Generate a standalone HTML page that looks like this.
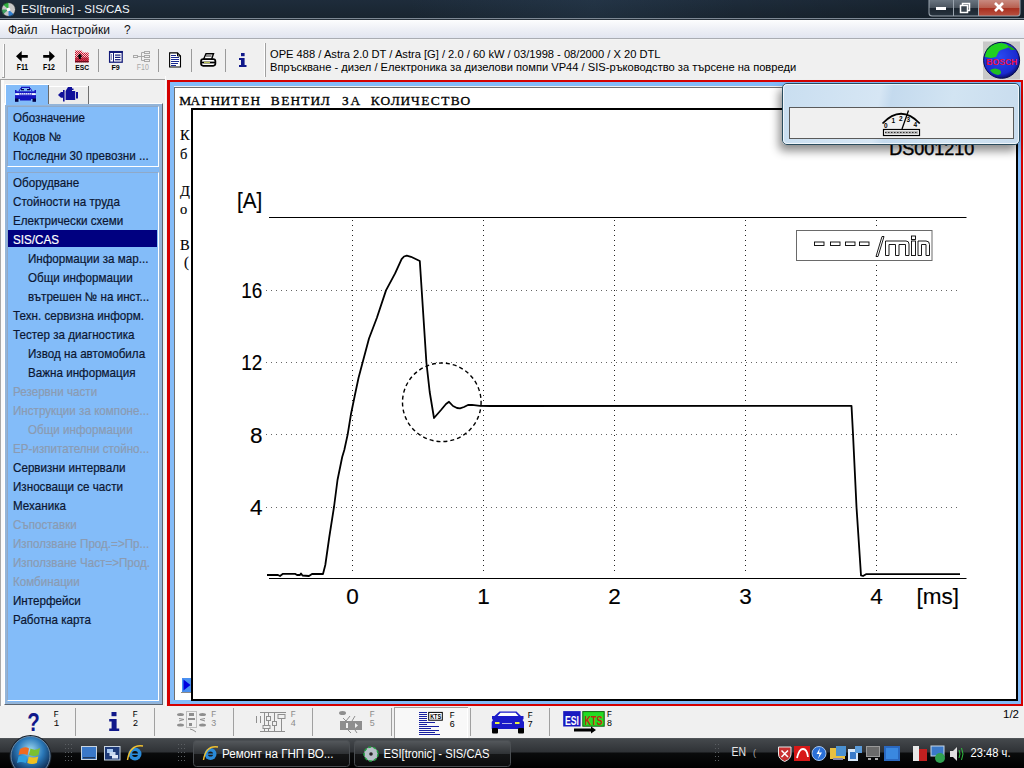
<!DOCTYPE html>
<html><head><meta charset="utf-8">
<style>
*{margin:0;padding:0;box-sizing:border-box}
html,body{width:1024px;height:768px;overflow:hidden;background:#f0f0f0;font-family:"Liberation Sans",sans-serif;position:relative}
.a{position:absolute}
.t{position:absolute;white-space:pre;line-height:1}
.li{font-size:12.2px;-webkit-text-stroke:0.2px currentColor;transform:scaleX(0.955);transform-origin:0 0}
.ser{font-family:"Liberation Serif",serif;font-size:14.5px;color:#000;-webkit-text-stroke:0.15px #000}
</style></head><body>
<!-- TITLE BAR -->
<div class="a" style="left:0;top:0;width:1024px;height:19px;background:linear-gradient(#1e2c3b,#18242f)"></div>
<div class="a" style="left:0;top:0;width:1024px;height:18px;background:linear-gradient(90deg,rgba(0,0,0,0) 0%,rgba(0,0,0,0) 40%,rgba(60,90,120,0.18) 58%,rgba(0,0,0,0.0) 72%,rgba(0,0,0,0.15) 90%)"></div>
<div class="a" style="left:0;top:18px;width:1024px;height:1px;background:#7d8894"></div>
<div class="a" style="left:0;top:19px;width:1024px;height:1px;background:#27313b"></div>
<div class="t" style="left:21px;top:4px;font-size:11.5px;color:#f2f6fa">ESI[tronic] - SIS/CAS</div>
<svg class="a" style="left:0;top:0" width="1024" height="19" viewBox="0 0 1024 19">
<defs><linearGradient id="wb" x1="0" y1="0" x2="0" y2="1"><stop offset="0" stop-color="#6a7580"/><stop offset="0.5" stop-color="#4a545e"/><stop offset="0.55" stop-color="#1c2630"/><stop offset="1" stop-color="#27333e"/></linearGradient>
<linearGradient id="cb" x1="0" y1="0" x2="0" y2="1"><stop offset="0" stop-color="#c88a80"/><stop offset="0.5" stop-color="#b86050"/><stop offset="0.55" stop-color="#a83020"/><stop offset="1" stop-color="#b85040"/></linearGradient></defs>
<circle cx="8.5" cy="9.5" r="7" fill="#c8c8c8"/>
<path d="M8.5,9.5 L3,4.5 A7,7 0 0 1 8.5,2.5 Z" fill="#30b040"/>
<path d="M8.5,9.5 L14,14.5 A7,7 0 0 1 8.5,16.5 Z" fill="#3080d0"/>
<path d="M8.5,9.5 L1.5,9.5 A7,7 0 0 0 3,14.5 Z" fill="#40a060"/>
<circle cx="8.5" cy="9.5" r="1.8" fill="#fff"/><circle cx="8.5" cy="9.5" r="7" fill="none" stroke="#101820" stroke-width="0.8"/>
<path d="M928.5,0 V13 Q928.5,16.5 932,16.5 H1017.5 Q1020.5,16.5 1020.5,13 V0" fill="#9aa4ae"/>
<path d="M929.5,0 V12.5 Q929.5,15.5 932.5,15.5 H953 V0 Z" fill="url(#wb)"/>
<rect x="954" y="0" width="24" height="15.5" fill="url(#wb)"/>
<path d="M979,0 V15.5 H1017 Q1019.5,15.5 1019.5,12.5 V0 Z" fill="url(#cb)"/>
<rect x="936" y="7" width="10" height="3" fill="#fff"/>
<rect x="962.5" y="3.5" width="7" height="7" fill="none" stroke="#fff" stroke-width="1.5"/>
<rect x="960.5" y="5.5" width="7" height="7" fill="#3a454f" stroke="#fff" stroke-width="1.5"/>
<path d="M995,3 L1003,11 M1003,3 L995,11" stroke="#fff" stroke-width="2.6"/>
</svg>
<!-- MENU BAR -->
<div class="a" style="left:0;top:20px;width:1024px;height:20px;background:linear-gradient(#fdfdfe,#eef0f6 45%,#dfe3ef)"></div>
<div class="a" style="left:0;top:38px;width:1024px;height:1px;background:#a9acb2"></div>
<div class="a" style="left:0;top:39px;width:1024px;height:1px;background:#f4f4f4"></div>
<div class="a" style="left:0;top:40px;width:1024px;height:1px;background:#b8b8b8"></div>
<div class="t" style="left:8px;top:24px;font-size:12px;color:#111">Файл</div>
<div class="t" style="left:51px;top:24px;font-size:12px;color:#111">Настройки</div>
<div class="t" style="left:124px;top:24px;font-size:12px;color:#111">?</div>
<!-- TOOLBAR -->
<div class="a" style="left:0;top:40px;width:1024px;height:39px;background:#f0f0f0"></div>
<div class="a" style="left:0;top:79px;width:166px;height:1px;background:#a0a0a0"></div>
<svg class="a" style="left:0;top:0" width="1024" height="80" viewBox="0 0 1024 80">
<!-- grip -->
<line x1="3.5" y1="44" x2="3.5" y2="77" stroke="#fff" stroke-width="1"/>
<line x1="4.5" y1="44" x2="4.5" y2="77" stroke="#a0a0a0" stroke-width="1"/>
<line x1="2" y1="77.5" x2="5" y2="77.5" stroke="#a0a0a0" stroke-width="1"/>
<!-- separators -->
<g stroke="#9a9a9a" stroke-width="1">
<line x1="66.5" y1="49" x2="66.5" y2="72"/>
<line x1="98.5" y1="49" x2="98.5" y2="72"/>
<line x1="158.5" y1="49" x2="158.5" y2="72"/>
<line x1="191.5" y1="49" x2="191.5" y2="72"/>
<line x1="225.5" y1="49" x2="225.5" y2="72"/>
</g>
<line x1="264.5" y1="43" x2="264.5" y2="77" stroke="#fff" stroke-width="1"/>
<line x1="265.5" y1="43" x2="265.5" y2="77" stroke="#a0a0a0" stroke-width="1"/>
<!-- arrows -->
<path d="M16,56.3 L21.7,50.9 V55 H27.8 V57.8 H21.7 V61.7 Z" fill="#000"/>
<path d="M54.9,56.3 L49.2,50.9 V55 H43.2 V57.8 H49.2 V61.7 Z" fill="#000"/>
<g font-family="Liberation Sans" font-weight="bold" font-size="8" fill="#000">
<text x="16.8" y="70" textLength="11.2" lengthAdjust="spacingAndGlyphs" font-size="8.2">F11</text>
<text x="43" y="70" textLength="11.9" lengthAdjust="spacingAndGlyphs" font-size="8.2">F12</text>
<text x="75.2" y="70" textLength="13.8" lengthAdjust="spacingAndGlyphs">ESC</text>
<text x="111.5" y="70" textLength="8.3" lengthAdjust="spacingAndGlyphs">F9</text>
</g>
<text x="136.8" y="70" font-family="Liberation Sans" font-size="8.5" fill="#a8a8a8" textLength="12" lengthAdjust="spacingAndGlyphs">F10</text>
<!-- ESC folder -->
<defs><pattern id="chk" width="2" height="2" patternUnits="userSpaceOnUse"><rect x="0" y="0" width="2" height="2" fill="#c8102a"/><rect x="0" y="0" width="1" height="1" fill="#f6d0d6"/><rect x="1" y="1" width="1" height="1" fill="#f6d0d6"/></pattern></defs>
<path d="M75,50.5 H81.5 L83,52.5 H88.7 V62.2 H75 Z" fill="url(#chk)"/>
<rect x="75" y="57.5" width="13.7" height="4.7" fill="#b0102a" opacity="0.75"/>
<path d="M79.8,53.5 L77,56.8 H78.8 V59 H80.8 V56.8 H82.6 Z" fill="#000"/>
<line x1="75" y1="61.8" x2="88.7" y2="61.8" stroke="#500010" stroke-width="1"/>
<!-- F9 list -->
<rect x="109.6" y="51.6" width="12.6" height="10.6" fill="#fff" stroke="#121a78" stroke-width="1.3"/>
<rect x="109" y="51" width="13.8" height="2" fill="#121a78"/>
<line x1="113.5" y1="53" x2="113.5" y2="62" stroke="#121a78" stroke-width="1"/>
<g fill="#121a78"><rect x="111" y="54.5" width="1" height="1"/><rect x="111" y="56.5" width="1" height="1"/><rect x="111" y="58.5" width="1" height="1"/>
<rect x="115" y="54.5" width="5.5" height="1.2"/><rect x="115" y="56.8" width="5.5" height="1.2"/><rect x="115" y="59.1" width="5.5" height="1.2"/></g>
<!-- F10 tree -->
<g fill="none" stroke="#a9a9a9" stroke-width="1">
<rect x="133.5" y="55.5" width="4" height="2"/><line x1="137.5" y1="56.5" x2="141" y2="56.5"/>
<line x1="141.5" y1="52.5" x2="141.5" y2="60.5"/>
<line x1="141.5" y1="52.5" x2="144" y2="52.5"/><line x1="141.5" y1="56.5" x2="144" y2="56.5"/><line x1="141.5" y1="60.5" x2="144" y2="60.5"/>
<rect x="144.5" y="51.5" width="5" height="2"/><rect x="144.5" y="55.5" width="5" height="2"/><rect x="144.5" y="59.5" width="5" height="2"/>
</g>
<!-- document -->
<path d="M169.6,52.9 H177.5 L180.5,56 V67 H169.6 Z" fill="#fff" stroke="#000" stroke-width="1.1"/>
<path d="M177.5,52.9 V56 H180.5" fill="none" stroke="#000" stroke-width="1"/>
<g stroke="#1a2a90" stroke-width="1"><line x1="171" y1="55.5" x2="176" y2="55.5"/><line x1="171" y1="57.5" x2="179" y2="57.5"/><line x1="171" y1="59.5" x2="179" y2="59.5"/><line x1="171" y1="61.5" x2="179" y2="61.5"/><line x1="171" y1="63.5" x2="178" y2="63.5"/><line x1="171" y1="65.5" x2="176" y2="65.5"/></g>
<!-- printer -->
<path d="M203.5,59.5 L206,53.8 H213.5 L211.5,59.5 Z" fill="#fff" stroke="#000" stroke-width="1.4"/>
<line x1="206" y1="56" x2="211.5" y2="56" stroke="#000" stroke-width="0.9"/>
<rect x="201" y="59.2" width="14.4" height="6.6" rx="2.2" fill="#fff" stroke="#000" stroke-width="1.7"/>
<rect x="201" y="61.6" width="14.4" height="1.8" fill="#000"/>
<rect x="204" y="61.9" width="6" height="1.2" fill="#b8c050"/>
<!-- info i -->
<g fill="#10188a"><rect x="241" y="53" width="3.6" height="3.2"/><path d="M239,58 H244.6 V65 H246.5 V67 H239 V65 H241 V60 H239 Z"/></g>
<!-- bosch -->
<rect x="983" y="41.5" width="37" height="38" fill="#c8c8c8"/>
<defs><radialGradient id="glb" cx="0.45" cy="0.4" r="0.6"><stop offset="0" stop-color="#2a4af0"/><stop offset="0.8" stop-color="#1a2ad0"/><stop offset="1" stop-color="#0a1070"/></radialGradient></defs>
<circle cx="1001.6" cy="60.3" r="18" fill="url(#glb)"/>
<path d="M985,57 Q985,47 993,44 Q1000,42 1006,44 L1010,47 L1004,49 Q999,50 998,53 L996,57 L991,58 Z" fill="#20d020"/>
<path d="M1007,45.5 Q1012,46 1015,50 L1011,50 Z" fill="#18a818"/>
<path d="M990,70 Q995,67 1000,70 Q1003,74 998,75 Q992,74 990,70 Z" fill="#20c020"/>
<text x="1001.8" y="64.5" text-anchor="middle" font-family="Liberation Sans" font-weight="bold" font-size="9.5" fill="#f01040" textLength="31" lengthAdjust="spacingAndGlyphs">BOSCH</text>
<circle cx="1001.6" cy="60.3" r="18" fill="none" stroke="#080c50" stroke-width="1"/>
</svg>
<div class="t" style="left:270px;top:48.8px;font-size:11.15px;color:#000">OPE 488 / Astra 2.0 DT / Astra [G] / 2.0 / 60 kW / 03/1998 - 08/2000 / X 20 DTL</div>
<div class="t" style="left:270px;top:62px;font-size:11.15px;color:#000">Впръскване - дизел / Електроника за дизелови помпи VP44 / SIS-ръководство за търсене на повреди</div>
<!-- LEFT PANEL -->
<div class="a" style="left:0;top:80px;width:1px;height:626px;background:#a8a8a8"></div>
<div class="a" style="left:1px;top:80px;width:3px;height:626px;background:#fbfbfb"></div>
<div class="a" style="left:4px;top:103px;width:159px;height:602px;background:#93b4d8;border-left:1px solid #fff;border-top:1px solid #fff;border-right:1px solid #5a636d;border-bottom:1px solid #5a636d"></div>
<!-- tabs -->
<div class="a" style="left:5px;top:84px;width:44px;height:21px;background:#83bcf9;border-left:1px solid #fff;border-top:1px solid #fff"></div>
<div class="a" style="left:48px;top:85px;width:1px;height:19px;background:#6a6a6a"></div>
<div class="a" style="left:49px;top:86px;width:40px;height:18px;background:#ececec;border-top:1px solid #fff"></div>
<div class="a" style="left:88px;top:86px;width:1px;height:18px;background:#707070"></div>
<div class="a" style="left:7px;top:106px;width:152px;height:596px;background:#80b8f5"></div>
<!-- group 1 -->
<div class="a" style="left:7px;top:106px;width:152px;height:61px;background:#83bcf9;border-left:1px solid #8fa9c8;border-top:1px solid #8fa9c8;border-right:1px solid #fff;border-bottom:1px solid #fff"></div>
<!-- group 2 -->
<div class="a" style="left:7px;top:172px;width:152px;height:529px;background:#83bcf9;border-left:1px solid #8fa9c8;border-top:1px solid #8fa9c8;border-right:1px solid #fff;border-bottom:1px solid #fff"></div>
<div class="a" style="left:8px;top:230px;width:149px;height:17px;background:#000080"></div>
<div class="t li" style="left:12.5px;top:111.67px;color:#0b1631">Обозначение</div>
<div class="t li" style="left:12.5px;top:130.67px;color:#0b1631">Кодов №</div>
<div class="t li" style="left:12.5px;top:149.67px;color:#0b1631">Последни 30 превозни ...</div>
<div class="t li" style="left:12.5px;top:176.67px;color:#0b1631">Оборудване</div>
<div class="t li" style="left:12.5px;top:195.67px;color:#0b1631">Стойности на труда</div>
<div class="t li" style="left:12.5px;top:214.67px;color:#0b1631">Електрически схеми</div>
<div class="t li" style="left:12.5px;top:233.67px;color:#ffffff">SIS/CAS</div>
<div class="t li" style="left:27.5px;top:252.67px;color:#0b1631">Информации за мар...</div>
<div class="t li" style="left:27.5px;top:271.67px;color:#0b1631">Общи информации</div>
<div class="t li" style="left:27.5px;top:290.67px;color:#0b1631">вътрешен № на инст...</div>
<div class="t li" style="left:12.5px;top:309.67px;color:#0b1631">Техн. сервизна информ.</div>
<div class="t li" style="left:12.5px;top:328.67px;color:#0b1631">Тестер за диагностика</div>
<div class="t li" style="left:27.5px;top:347.67px;color:#0b1631">Извод на автомобила</div>
<div class="t li" style="left:27.5px;top:366.67px;color:#0b1631">Важна информация</div>
<div class="t li" style="left:12.5px;top:385.67px;color:#8b9bb2">Резервни части</div>
<div class="t li" style="left:12.5px;top:404.67px;color:#8b9bb2">Инструкции за компоне...</div>
<div class="t li" style="left:27.5px;top:423.67px;color:#8b9bb2">Общи информации</div>
<div class="t li" style="left:12.5px;top:442.67px;color:#8b9bb2">ЕР-изпитателни стойно...</div>
<div class="t li" style="left:12.5px;top:461.67px;color:#0b1631">Сервизни интервали</div>
<div class="t li" style="left:12.5px;top:480.67px;color:#0b1631">Износващи се части</div>
<div class="t li" style="left:12.5px;top:499.67px;color:#0b1631">Механика</div>
<div class="t li" style="left:12.5px;top:518.67px;color:#8b9bb2">Съпоставки</div>
<div class="t li" style="left:12.5px;top:537.67px;color:#8b9bb2">Използване Прод.=&gt;Пр...</div>
<div class="t li" style="left:12.5px;top:556.67px;color:#8b9bb2">Използване Част=&gt;Прод.</div>
<div class="t li" style="left:12.5px;top:575.67px;color:#8b9bb2">Комбинации</div>
<div class="t li" style="left:12.5px;top:594.67px;color:#0b1631">Интерфейси</div>
<div class="t li" style="left:12.5px;top:613.67px;color:#0b1631">Работна карта</div>
<svg class="a" style="left:0;top:80px" width="100" height="30" viewBox="0 80 100 30">
<g fill="#1414c0">
<rect x="21" y="86.7" width="9" height="1.3"/>
<path d="M18.5,91 L20.5,88 H22 V89 H20.8 L19.5,91 Z M32.5,91 L30.5,88 H29 V89 H30.2 L31.5,91 Z"/>
<rect x="15" y="90" width="1.5" height="2.5"/><rect x="34.5" y="90" width="1.5" height="2.5"/>
<rect x="15" y="91.3" width="21" height="2"/>
<rect x="15" y="95" width="21" height="4"/>
<rect x="20" y="98.5" width="11" height="2"/>
</g>
<g fill="#000048">
<rect x="21" y="89" width="3" height="1.3"/><rect x="27" y="89" width="3" height="1.3"/>
<rect x="15" y="98.5" width="3.5" height="3.3"/><rect x="32.5" y="98.5" width="3.5" height="3.3"/>
</g>
<rect x="15.5" y="93.2" width="20" height="1.9" fill="#f4f4ff"/>
<path d="M19,93.2 h1v1h1v-1h1v1h1v-1h1v1h1v-1h1v1h1v-1h1v1h1v-1h1v1h1v-1h1v1.9 h-13 Z" fill="#1414c0" opacity="0.55"/>
<g fill="#10109a">
<path d="M58,95 L61,92 H63 V97.7 H61 Z"/>
<rect x="63" y="90" width="1.6" height="11.5"/>
<rect x="65.6" y="91" width="9.6" height="9"/>
<path d="M65.6,91 L68,87 H72 V88.5 H73.5 V90 H72 V91 Z"/>
<rect x="76" y="92" width="2" height="6.5"/>
</g>
</svg>

<div class="a" style="left:165px;top:76px;width:1px;height:630px;background:#fdfdfd"></div>
<!-- CONTENT FRAME -->
<div class="a" style="left:167px;top:80px;width:856px;height:626px;border:2px solid #d40000;border-left-width:3px"></div>
<div class="a" style="left:170px;top:82px;width:851px;height:622px;border:4px solid #83bcf9;border-right-width:3px;border-bottom-width:4px"></div>
<div class="a" style="left:174px;top:87px;width:844px;height:613px;background:#fff;border-left:1px solid #707070;border-top:1px solid #707070"></div>
<svg class="a" style="left:175px;top:90px" width="310" height="18" viewBox="175 90 310 18"><text x="185.3 195.3 205.3 215.3 225.3 235.3 245.3 255.3 265.3 275.3 285.3 295.3 305.3 315.3 325.3 335.3 345.3 355.3 365.3 375.3 385.3 395.3 405.3 415.3 425.3 435.3 445.3 455.3 465.3" y="104.9" text-anchor="middle" font-family="Liberation Serif" font-size="13.4" fill="#000" stroke="#000" stroke-width="0.3">МАГНИТЕН ВЕНТИЛ ЗА КОЛИЧЕСТВО</text></svg>
<div class="t ser" style="left:180px;top:128px">К</div>
<div class="t ser" style="left:180px;top:147px">б</div>
<div class="t ser" style="left:180px;top:184px">Д</div>
<div class="t ser" style="left:180px;top:202px">о</div>
<div class="t ser" style="left:180px;top:238px">В</div>
<div class="t ser" style="left:184px;top:255px">(</div>
<!-- CHART WINDOW -->
<div class="a" style="left:191px;top:108px;width:827px;height:593px;border:2px solid #000;background:#fff"></div>
<svg class="a" style="left:0;top:0" width="1024" height="768" viewBox="0 0 1024 768">
<defs><clipPath id="cw"><rect x="193" y="110" width="823" height="589"/></clipPath></defs>
<g clip-path="url(#cw)">
<g stroke="#000" stroke-width="1" fill="none">
<line x1="269" y1="217.5" x2="966.5" y2="217.5"/>
<line x1="269" y1="578.5" x2="966.5" y2="578.5"/>
</g>
<g stroke="#666" stroke-width="1" stroke-dasharray="1 4" fill="none">
<line x1="266" y1="290.5" x2="960" y2="290.5"/>
<line x1="266" y1="362.5" x2="960" y2="362.5"/>
<line x1="266" y1="434.5" x2="960" y2="434.5"/>
<line x1="266" y1="507.5" x2="960" y2="507.5"/>
</g>
<g stroke="#222" stroke-width="1" stroke-dasharray="1 4" fill="none">
<line x1="352.5" y1="220" x2="352.5" y2="575"/>
<line x1="483.5" y1="220" x2="483.5" y2="575"/>
<line x1="614.5" y1="220" x2="614.5" y2="575"/>
<line x1="745.5" y1="220" x2="745.5" y2="575"/>
<line x1="876.5" y1="220" x2="876.5" y2="575"/>
</g>
<circle cx="441.8" cy="402.3" r="39.3" stroke="#000" stroke-width="1.4" stroke-dasharray="4 3" fill="none"/>
<polyline fill="none" stroke="#000" stroke-width="1.8" stroke-linejoin="round" points="267,575 278,575 280,576 283,573.8 295,573.8 297,575 300,575 301,573.5 302.5,575.5 309,576 312,574 323,574 325.3,565 329.3,537 334,507 337.5,480 342.2,457 344.3,450 347.7,434.4 351,414 354.7,396 358.5,378 362.6,362.5 369,338.5 376.9,317.7 386,290.4 395.1,273.4 401.6,259.1 404,256.5 406.8,255.7 411,256.8 419.8,261 426.4,362.5 429.7,392 434,418 441,410 446,404 449,401.8 453,406 457,408 460,408.3 464,407 468,405 472,404.8 480,405.8 490,406 851.5,405.8 853,434 856.5,507 861,575.4 863,576 866,574.2 960,574.2"/>
<g font-family="Liberation Sans" font-size="22.5" fill="#000" stroke="#000" stroke-width="0.15">
<text x="237" y="208" textLength="25.2" lengthAdjust="spacingAndGlyphs">[A]</text>
<text x="241.3" y="298" textLength="21" lengthAdjust="spacingAndGlyphs">16</text>
<text x="241.3" y="370.3" textLength="21" lengthAdjust="spacingAndGlyphs">12</text>
<text x="262.5" y="442.8" text-anchor="end">8</text>
<text x="262.5" y="515" text-anchor="end">4</text>
<text x="352.5" y="603.6" text-anchor="middle">0</text>
<text x="483.5" y="603.6" text-anchor="middle">1</text>
<text x="614.5" y="603.6" text-anchor="middle">2</text>
<text x="745.5" y="603.6" text-anchor="middle">3</text>
<text x="876.5" y="603.6" text-anchor="middle">4</text>
<text x="959" y="603.6" text-anchor="end">[ms]</text>
<text x="974.3" y="154.6" text-anchor="end" font-size="18" stroke-width="0.45">DS001210</text>
</g>
<rect x="796.5" y="230.5" width="135.5" height="30" fill="#fff" stroke="#6a6a6a" stroke-width="1"/>
<g fill="#fff" stroke="#000" stroke-width="0.9">
<rect x="814.5" y="242" width="9.5" height="3.5"/>
<rect x="830.5" y="242" width="9.5" height="3.5"/>
<rect x="845.5" y="242" width="9.5" height="3.5"/>
<rect x="859.5" y="242" width="9.5" height="3.5"/>
<polygon points="882,236.5 884,236.5 878,256.5 876,256.5"/>
<path d="M885.5,255.5 V241 H906 Q909,241 909,244 V255.5 H905.5 V244.5 H899 V255.5 H895.5 V244.5 H889 V255.5 Z"/>
<rect x="911.5" y="241" width="4" height="14.5"/>
<rect x="911.5" y="236" width="4" height="3.5"/>
<path d="M918,255.5 V241 H926 Q929.5,241 929.5,244.5 V255.5 H926 V244.5 H921.5 V255.5 Z"/>
</g>
</g>
</svg>

<svg class="a" style="left:180px;top:675px" width="14" height="22" viewBox="180 675 14 22">
<rect x="182" y="678" width="9" height="14" fill="#4a90f0"/>
<path d="M183.5,679.5 L190.5,685 L183.5,690.5 Z" fill="#0000e0"/>
<line x1="181" y1="692.5" x2="191" y2="692.5" stroke="#8a8a8a" stroke-width="1"/>
</svg>
<!-- POPUP -->
<div class="a" style="left:782px;top:83px;width:238px;height:62px;border-radius:5px;box-shadow:-3px 6px 10px rgba(0,0,0,0.45);background:linear-gradient(100deg,#c9def0 0%,#d6e6f4 40%,#c4daee 45%,#d2e4f2 70%,#c8dcee 100%);border:1px solid #2a4c5e"></div>
<div class="a" style="left:783px;top:84px;width:236px;height:60px;border-radius:4px;border:1px solid rgba(255,255,255,0.7)"></div>
<div class="a" style="left:789px;top:107px;width:225px;height:32px;background:#f0f0f0;border:1px solid #5a5a5a"></div>
<svg class="a" style="left:870px;top:104px" width="60" height="36" viewBox="870 104 60 36">
<path d="M882.5,123.5 Q901,104 919.8,123.5" fill="none" stroke="#000" stroke-width="1.8"/>
<line x1="902" y1="129" x2="908.5" y2="110.5" stroke="#000" stroke-width="1.3"/>
<rect x="883.5" y="129.5" width="36" height="6" fill="#fff" stroke="#000" stroke-width="1.2"/>
<rect x="885" y="131" width="33" height="3" fill="#bbb"/><line x1="885" y1="132.5" x2="918" y2="132.5" stroke="#333" stroke-width="1" stroke-dasharray="1.5 1.5"/>
<g font-family="Liberation Sans" font-weight="bold" font-size="6.5" fill="#000">
<text x="884" y="127.5">0</text><text x="891.5" y="122.5">1</text><text x="899" y="121">2</text><text x="906.5" y="122">3</text><text x="913.5" y="127">4</text>
</g>
</svg>
<!-- F BAR -->
<div class="a" style="left:0;top:706px;width:1024px;height:32px;background:#f0f0f0"></div>
<svg class="a" style="left:0;top:700px" width="1024" height="38" viewBox="0 700 1024 38">
<!-- pressed F6 -->
<rect x="394.5" y="707.5" width="73" height="31" fill="#f8f8f8" stroke="#a0a0a0" stroke-width="1"/>
<line x1="467.5" y1="708" x2="467.5" y2="738" stroke="#fff"/>
<g stroke="#a0a0a0" stroke-width="1">
<line x1="75.5" y1="708" x2="75.5" y2="736"/>
<line x1="154.5" y1="708" x2="154.5" y2="736"/>
<line x1="233.5" y1="708" x2="233.5" y2="736"/>
<line x1="312.5" y1="708" x2="312.5" y2="736"/>
<line x1="391.5" y1="708" x2="391.5" y2="736"/>
<line x1="470.5" y1="708" x2="470.5" y2="736"/>
<line x1="549.5" y1="708" x2="549.5" y2="736"/>
</g>
<g font-family="Liberation Sans" font-weight="bold" fill="#10188a">
<text x="27.3" y="731" font-size="25.5" textLength="12.5" lengthAdjust="spacingAndGlyphs">?</text>
</g>
<g fill="#10188a"><rect x="111.5" y="712" width="5" height="4.2"/><path d="M109.2,719 H116.6 V728.5 H119.2 V731 H109.2 V728.5 H111.6 V721.5 H109.2 Z"/></g>
<g font-family="Liberation Mono" font-size="9" fill="#000">
<text x="53.5" y="717">F</text><text x="53.8" y="726">1</text>
<text x="132.6" y="717">F</text><text x="132.8" y="726">2</text>
<text x="449.4" y="718">F</text><text x="449.4" y="727">6</text>
<text x="527.4" y="717.5">F</text><text x="527.4" y="726.5">7</text>
<text x="606.8" y="717">F</text><text x="606.8" y="726">8</text>
</g>
<g font-family="Liberation Mono" font-size="9" fill="#8c8c8c">
<text x="211" y="717">F</text><text x="211" y="726">3</text>
<text x="290.5" y="717">F</text><text x="290.5" y="726">4</text>
<text x="369.5" y="717">F</text><text x="369.5" y="726">5</text>
</g>
<!-- F3 icon -->
<g fill="#8e8e8e">
<ellipse cx="180.5" cy="714.5" rx="3.5" ry="1.6"/><ellipse cx="202.5" cy="714.5" rx="3.5" ry="1.6"/>
<ellipse cx="180.5" cy="725" rx="3.5" ry="1.6"/><ellipse cx="202.5" cy="725" rx="3.5" ry="1.6"/>
<rect x="189" y="713" width="5" height="3"/><rect x="188" y="718" width="7" height="2"/><rect x="189" y="723" width="3" height="3"/>
</g>
<g stroke="#8e8e8e" stroke-width="1" stroke-dasharray="1 1" fill="none"><rect x="186.5" y="711.5" width="10" height="16"/></g>
<path d="M179,718.5 L184,719.5 L179,721 M205,718.5 L200,719.5 L205,721 M190,729 L193,730 L196,732" stroke="#8e8e8e" stroke-width="1" fill="none"/>
<!-- F4 icon -->
<g stroke="#8e8e8e" stroke-width="1" fill="none">
<line x1="260" y1="712.5" x2="286" y2="712.5"/><line x1="260" y1="731.5" x2="285" y2="731.5"/>
<line x1="264.5" y1="712" x2="264.5" y2="731"/><line x1="268.5" y1="712" x2="268.5" y2="731"/>
<line x1="274.5" y1="712" x2="274.5" y2="731"/><line x1="281.5" y1="716" x2="281.5" y2="731"/>
<rect x="266.5" y="716.5" width="4" height="4" fill="#f0f0f0"/><rect x="272.5" y="721.5" width="4" height="4" fill="#f0f0f0"/>
<rect x="263" y="725.5" width="7" height="3" fill="#f0f0f0"/><rect x="278" y="714.5" width="7" height="4" fill="#f0f0f0"/>
<line x1="256.5" y1="716" x2="256.5" y2="723"/><line x1="260.5" y1="716" x2="260.5" y2="723"/>
</g>
<!-- F5 icon -->
<g fill="#8e8e8e">
<rect x="340" y="721" width="22" height="9"/>
<ellipse cx="342.5" cy="713" rx="3.5" ry="2"/>
</g>
<g fill="#f0f0f0"><rect x="346" y="723" width="2" height="5"/><path d="M355,723 L358,725.5 L355,728 Z"/></g>
<path d="M343,718 L346,721 M350,716 L346,721 M355,716 L352,721 M348,730 L351,733 M355,730 L357,733" stroke="#8e8e8e" stroke-width="1" fill="none"/>
<!-- F6 icon -->
<g fill="#1820a0">
<rect x="419" y="712" width="8" height="1"/><rect x="419" y="714" width="8" height="1"/><rect x="419" y="716" width="8" height="1"/><rect x="419" y="718" width="8" height="1"/><rect x="419" y="720" width="8" height="1"/>
<rect x="419" y="722" width="16" height="1"/><rect x="419" y="724" width="8" height="1"/><rect x="419" y="726" width="20" height="1"/><rect x="419" y="728" width="12" height="1"/><rect x="419" y="730" width="20" height="1"/><rect x="419" y="732" width="16" height="1"/><rect x="419" y="734" width="21" height="1"/>
</g>
<rect x="428.7" y="712.4" width="13.6" height="7.8" fill="#fff" stroke="#000" stroke-width="1"/>
<text x="430.2" y="718.8" font-family="Liberation Sans" font-weight="bold" font-size="6.5" fill="#000" textLength="10.8" lengthAdjust="spacingAndGlyphs">KTS</text>
<!-- F7 car -->
<path d="M499.5,711.5 H516.5 L521,716 H523.5 V719 L522.5,720 L524,722 V729 H491.7 V722 L493,720 L492,719 V716 H494.5 Z" fill="#1a1ac8"/>
<path d="M500.5,712.8 H515.5 L518.5,716 H497.5 Z" fill="#fff"/>
<rect x="492" y="728" width="6" height="5.5" rx="1" fill="#000"/><rect x="518" y="728" width="6" height="5.5" rx="1" fill="#000"/>
<rect x="495" y="722" width="4.5" height="2" fill="#e8f040"/><rect x="515" y="722" width="4.5" height="2" fill="#e8f040"/>
<path d="M502,723 l1,1 l1,-1 l1,1 l1,-1 l1,1 l1,-1 l1,1 l1,-1 l1,1 l1,-1" stroke="#dde" stroke-width="0.8" fill="none"/>
<!-- F8 -->
<rect x="563.2" y="711.1" width="17.4" height="15.4" fill="#1818c0"/>
<text x="565" y="724.5" font-family="Liberation Sans" font-weight="bold" font-size="12" fill="#fff" textLength="14" lengthAdjust="spacingAndGlyphs">ESI</text>
<rect x="582.8" y="711.6" width="21.4" height="14.6" fill="#22dd22" stroke="#106010" stroke-width="1"/>
<text x="584.5" y="724.5" font-family="Liberation Sans" font-weight="bold" font-size="12" fill="#c02a10" textLength="18" lengthAdjust="spacingAndGlyphs">KTS</text>
<path d="M574,728.5 H591 V726.5 L596,730 L591,733.5 V731.5 H574 Z" fill="#000"/>
<text x="1003" y="718" font-family="Liberation Sans" font-size="11.5" fill="#000">1/2</text>
</svg>
<!-- TASKBAR -->
<div class="a" style="left:0;top:738px;width:1024px;height:30px;background:linear-gradient(#5b5f63 0px,#44484c 1px,#2f3236 14px,#0a0b0c 15px,#000 30px)"></div>
<svg class="a" style="left:0;top:733px" width="1024" height="35" viewBox="0 733 1024 35">
<defs>
<radialGradient id="orb" cx="0.5" cy="0.35" r="0.6"><stop offset="0" stop-color="#9fd8f0"/><stop offset="0.55" stop-color="#2a78b8"/><stop offset="1" stop-color="#0e2a50"/></radialGradient>
<linearGradient id="tbb" x1="0" y1="0" x2="0" y2="1"><stop offset="0" stop-color="#55595d"/><stop offset="0.5" stop-color="#303336"/><stop offset="0.52" stop-color="#151617"/><stop offset="1" stop-color="#0c0c0d"/></linearGradient>
</defs>
<circle cx="30.5" cy="756" r="21" fill="#1a2430"/>
<circle cx="30.5" cy="756" r="19.5" fill="url(#orb)" stroke="#6a8aa8" stroke-width="1"/>
<path d="M20,749 Q25,746 29,748.5 L27.5,755 Q23,753 18.5,755 Z" fill="#f06a20"/>
<path d="M30.5,748.5 Q35,751 40,748 L38.5,755 Q34,757 29,755 Z" fill="#7ac030"/>
<path d="M18.5,756.5 Q23,754.5 27.3,756.5 L25.8,763 Q21,761 17,763 Z" fill="#30a0e0"/>
<path d="M28.8,756.5 Q33,758.5 38.3,756.5 L36.8,763 Q32,765 27.3,763 Z" fill="#f0c020"/>
<g fill="#5a5e62">
<rect x="65" y="744" width="1" height="1"/><rect x="68" y="744" width="1" height="1"/><rect x="71" y="744" width="1" height="1"/>
<rect x="65" y="748" width="1" height="1"/><rect x="68" y="748" width="1" height="1"/><rect x="71" y="748" width="1" height="1"/>
<rect x="65" y="752" width="1" height="1"/><rect x="68" y="752" width="1" height="1"/><rect x="71" y="752" width="1" height="1"/>
<rect x="65" y="756" width="1" height="1"/><rect x="68" y="756" width="1" height="1"/><rect x="71" y="756" width="1" height="1"/>
<rect x="65" y="760" width="1" height="1"/><rect x="68" y="760" width="1" height="1"/><rect x="71" y="760" width="1" height="1"/>
<rect x="178" y="744" width="1" height="1"/><rect x="181" y="744" width="1" height="1"/><rect x="184" y="744" width="1" height="1"/>
<rect x="178" y="748" width="1" height="1"/><rect x="181" y="748" width="1" height="1"/><rect x="184" y="748" width="1" height="1"/>
<rect x="178" y="752" width="1" height="1"/><rect x="181" y="752" width="1" height="1"/><rect x="184" y="752" width="1" height="1"/>
<rect x="178" y="756" width="1" height="1"/><rect x="181" y="756" width="1" height="1"/><rect x="184" y="756" width="1" height="1"/>
<rect x="178" y="760" width="1" height="1"/><rect x="181" y="760" width="1" height="1"/><rect x="184" y="760" width="1" height="1"/>
<rect x="715" y="744" width="1" height="1"/><rect x="718" y="744" width="1" height="1"/>
<rect x="715" y="748" width="1" height="1"/><rect x="718" y="748" width="1" height="1"/>
<rect x="715" y="752" width="1" height="1"/><rect x="718" y="752" width="1" height="1"/>
<rect x="715" y="756" width="1" height="1"/><rect x="718" y="756" width="1" height="1"/>
<rect x="715" y="760" width="1" height="1"/><rect x="718" y="760" width="1" height="1"/>
</g>
<!-- quick launch -->
<rect x="81.5" y="746.5" width="15" height="13" fill="#3a78c8" stroke="#c8d4e0" stroke-width="1"/>
<rect x="83" y="757" width="12" height="1.5" fill="#203a60"/>
<rect x="104.5" y="746.5" width="15.5" height="13.5" fill="#1e3a78" stroke="#c8d4e0" stroke-width="1"/>
<rect x="107" y="749" width="6" height="4" fill="#a8c8f0"/><rect x="109.5" y="752" width="6" height="4" fill="#c8d8f0"/><rect x="112" y="755" width="6" height="3.5" fill="#e0e8f8"/>
<circle cx="135" cy="754" r="6.5" fill="#2a8ad8"/><circle cx="135" cy="754" r="3" fill="#0a0b0c"/>
<rect x="130" y="753.5" width="9" height="1.5" fill="#2a8ad8"/>
<path d="M127.5,760 Q130,744 143,746" stroke="#f0c030" stroke-width="1.5" fill="none"/>
<!-- task buttons -->
<rect x="193.5" y="740.5" width="156" height="26" rx="3" fill="url(#tbb)" stroke="#4a4e52" stroke-width="1"/>
<rect x="354.5" y="740.5" width="156" height="26" rx="3" fill="url(#tbb)" stroke="#4a4e52" stroke-width="1"/>
<circle cx="210.5" cy="754" r="6" fill="#2a8ad8"/><circle cx="210.5" cy="754" r="2.6" fill="#1a1b1c"/>
<rect x="206" y="753.5" width="8.5" height="1.3" fill="#2a8ad8"/>
<path d="M203.5,760 Q206,745 218,747" stroke="#f0c030" stroke-width="1.4" fill="none"/>
<circle cx="371" cy="754" r="7" fill="#b8c0c8"/><circle cx="371" cy="754" r="7" fill="none" stroke="#20a040" stroke-width="1.5" stroke-dasharray="3 2"/><circle cx="371" cy="754" r="1.8" fill="#222"/>
<text x="222" y="758" font-family="Liberation Sans" font-size="12" fill="#fff" textLength="111.5" lengthAdjust="spacingAndGlyphs">Ремонт на ГНП ВО...</text>
<text x="383.5" y="758" font-family="Liberation Sans" font-size="12" fill="#fff" textLength="106" lengthAdjust="spacingAndGlyphs">ESI[tronic] - SIS/CAS</text>
<text x="731.5" y="755.5" font-family="Liberation Sans" font-size="12" fill="#e8e8e8" textLength="14.5" lengthAdjust="spacingAndGlyphs">EN</text>
<text x="753" y="756" font-family="Liberation Sans" font-size="9" fill="#aaa">(</text>
<text x="970.5" y="757" font-family="Liberation Sans" font-size="12.5" fill="#fff" textLength="40" lengthAdjust="spacingAndGlyphs">23:48 ч.</text>
<!-- tray icons -->
<path d="M778.5,747 H791 V754 Q791,759 784.7,761.5 Q778.5,759 778.5,754 Z" fill="#c83030" stroke="#e8e8e8" stroke-width="1"/>
<path d="M781.5,750.5 L788,757 M788,750.5 L781.5,757" stroke="#fff" stroke-width="1.5"/>
<rect x="794" y="746" width="16" height="15" fill="#d81818"/>
<path d="M797,758 Q799,749 803,749 Q807,749 808,757" stroke="#fff" stroke-width="1.8" fill="none"/>
<circle cx="819" cy="753.5" r="7" fill="#2a70d8" stroke="#a8c8f0" stroke-width="1"/>
<path d="M820,748 L816.5,754 H819.5 L818,759 L822,752.5 H819 Z" fill="#fff"/>
<rect x="830" y="748" width="15" height="11" fill="#e8c040"/><rect x="836" y="746" width="10" height="10" fill="#4a90d0"/><rect x="833" y="758" width="10" height="2" fill="#88a"/>
<rect x="848" y="749" width="10" height="12" fill="#d8e8f8"/><rect x="850" y="752" width="6" height="7" fill="#3a7ac8"/><rect x="855" y="746" width="7" height="7" fill="#5a9ad8"/>
<rect x="866" y="746" width="14" height="11" fill="#9a9a9a"/><rect x="867" y="747" width="12" height="9" fill="#6a6a6a"/><rect x="868" y="758" width="3" height="2" fill="#aaa"/><rect x="875" y="758" width="3" height="2" fill="#aaa"/>
<rect x="884" y="746" width="16" height="15" fill="#2a68c0"/><rect x="886" y="748" width="12" height="11" fill="#3a88e0"/>
<rect x="913" y="746" width="6" height="15" fill="#e8e8e8"/><rect x="919" y="749" width="8" height="12" fill="#c02020"/>
<rect x="931" y="746" width="13" height="10" fill="#3a78c8" stroke="#c8d8e8" stroke-width="1"/><circle cx="940" cy="758" r="5" fill="#30a050"/>
<path d="M950,751 H953 L957,747 V761 L953,757 H950 Z" fill="#e0e0e0"/>
<path d="M959,750 Q961,754 959,758 M961.5,748 Q964.5,754 961.5,760" stroke="#30c040" stroke-width="1" fill="none"/>
</svg>
</body></html>
